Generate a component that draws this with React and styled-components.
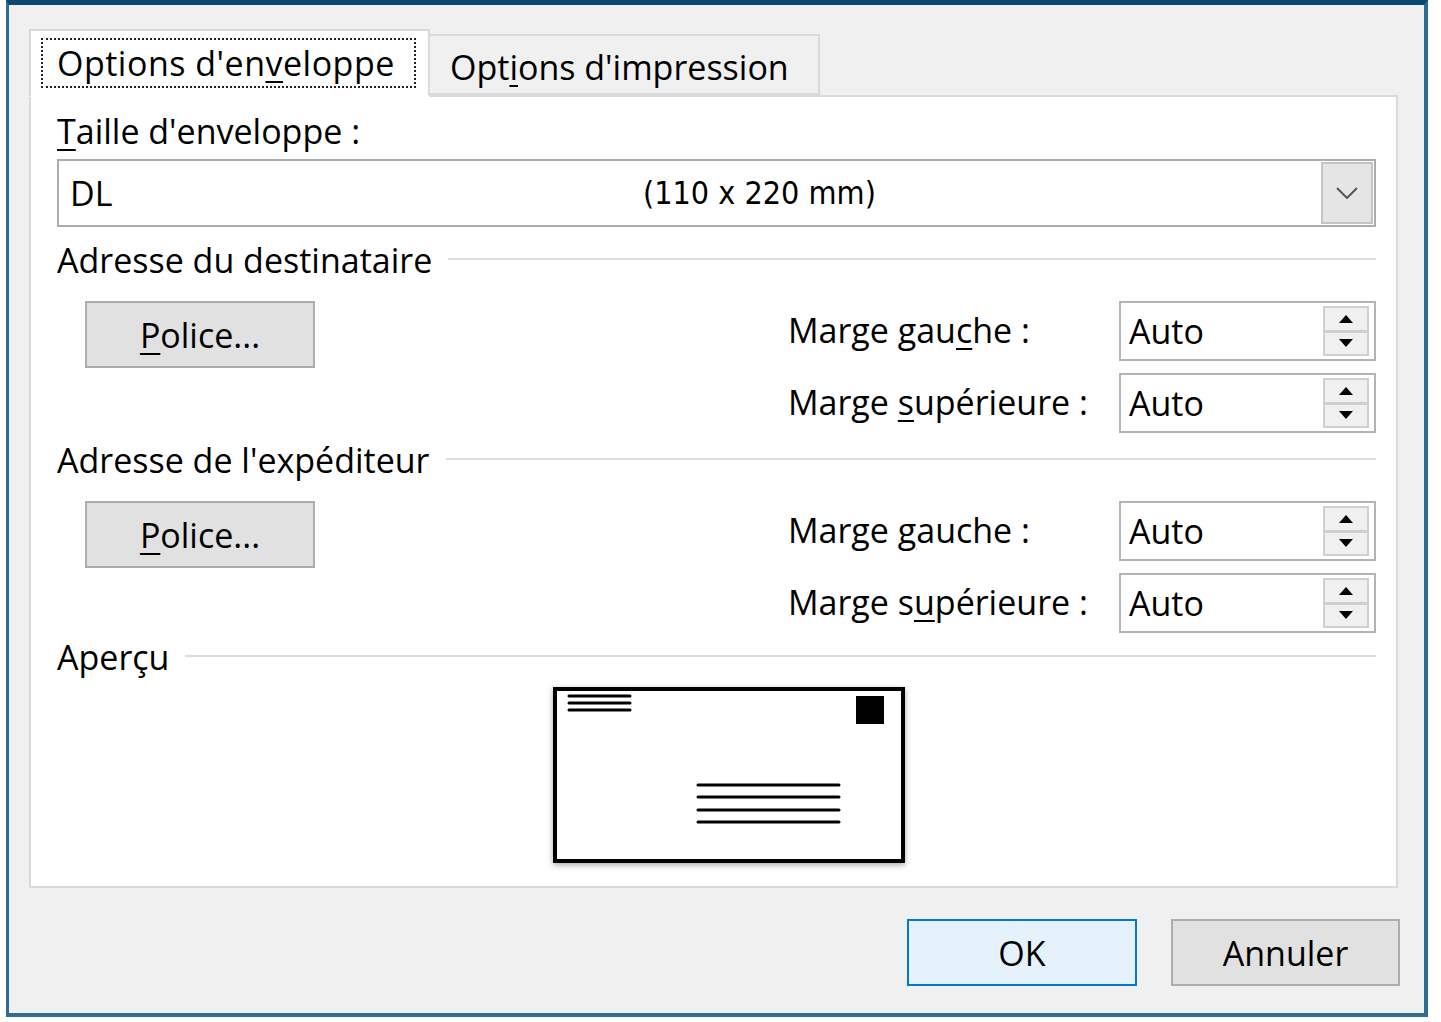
import React from 'react'
import styled, { createGlobalStyle } from 'styled-components'

const GlobalStyle = createGlobalStyle`
  html, body {
    margin: 0;
    padding: 0;
    background: #ffffff;
  }
  body {
    font-family: "Open Sans", "Noto Sans", sans-serif;
    color: #000;
  }
`

const Page = styled.div`
  width: 1441px;
  height: 1022px;
  padding-left: 6px;
  box-sizing: border-box;
`

const Window = styled.div`
  width: 1422px;
  height: 1017px;
  box-sizing: border-box;
  background: #f0f0f0;
  border-top: 5px solid #0c4771;
  border-left: 3px solid #2e6b96;
  border-right: 4px solid #2e6b96;
  border-bottom: 4px solid #2e6b96;
  padding: 24px 24px 0 20px;
  display: flex;
  flex-direction: column;
`

const TabRow = styled.div`
  display: flex;
  align-items: flex-end;
  height: 66px;
  position: relative;
  z-index: 1;
`

const Tab = styled.div`
  box-sizing: border-box;
  display: flex;
  align-items: center;
  height: ${p => (p.$active ? '68px' : '61px')};
  width: ${p => p.$w}px;
  background: ${p => (p.$active ? '#ffffff' : '#f0f0f0')};
  border: 2px solid #d9d9d9;
  border-bottom: ${p => (p.$active ? '2px solid #ffffff' : '2px solid #d9d9d9')};
  border-left: ${p => (p.$active ? '2px solid #d9d9d9' : 'none')};
  margin-bottom: ${p => (p.$active ? '-2px' : '0')};
  padding-left: ${p => (p.$active ? '10px' : '20px')};
  padding-top: ${p => (p.$active ? '0' : '4px')};
  font-size: 34px;
  white-space: nowrap;
`

const FocusBox = styled.div`
  box-sizing: border-box;
  width: 375px;
  height: 50px;
  padding: 0 0 0 14px;
  display: flex;
  align-items: center;
  border: 2px dotted #222;
  letter-spacing: 0.5px;
`

const U = styled.span`
  text-decoration: underline;
  text-underline-offset: 5px;
  text-decoration-thickness: 2px;
`

const Panel = styled.div`
  box-sizing: border-box;
  width: 1369px;
  height: 793px;
  background: #ffffff;
  border: 2px solid #dadada;
  padding: 14px 20px 0 26px;
  display: flex;
  flex-direction: column;
`

const Label = styled.div`
  font-size: 34px;
  line-height: 40px;
  white-space: nowrap;
`

const Combo = styled.div`
  box-sizing: border-box;
  margin-top: 8px;
  height: 68px;
  border: 2px solid #acacac;
  display: flex;
  align-items: stretch;
  background: #fff;
`

const ComboText = styled.div`
  flex: 1;
  display: grid;
  grid-template-columns: 573px 1fr;
  align-items: center;
  padding-left: 11px;
  font-size: 34px;
`

const Narrow = styled.span`
  font-family: "Liberation Sans Narrow", "DejaVu Sans Condensed", "Open Sans", sans-serif;
  font-size: 32px;
`

const DropButton = styled.div`
  box-sizing: border-box;
  width: 52px;
  margin: 1px;
  background: #e5e5e5;
  border: 2px solid #c4c4c4;
  display: flex;
  align-items: center;
  justify-content: center;
`

const GroupHead = styled.div`
  display: flex;
  align-items: center;
  gap: 16px;
  margin-top: ${p => p.$top}px;
  font-size: 34px;
  line-height: 40px;
  white-space: nowrap;
  &::after {
    content: '';
    flex: 1;
    height: 2px;
    background: #dcdcdc;
    margin-top: -2px;
  }
`

const GroupBody = styled.div`
  display: grid;
  grid-template-columns: 1fr 331px 257px;
  grid-auto-rows: 60px;
  row-gap: 12px;
  margin-top: 21px;
  align-items: center;
`

const PushButton = styled.div`
  box-sizing: border-box;
  grid-row: 1;
  grid-column: 1;
  align-self: start;
  margin-left: 28px;
  width: ${p => p.$w}px;
  height: 67px;
  background: ${p => (p.$default ? '#e5f1fb' : '#e1e1e1')};
  border: 2px solid ${p => (p.$default ? '#0078d7' : '#adadad')};
  display: flex;
  align-items: center;
  justify-content: center;
  font-size: 34px;
`

const FieldLabel = styled.div`
  grid-column: 2;
  font-size: 34px;
  white-space: nowrap;
  padding-bottom: 2px;
`

const Spin = styled.div`
  grid-column: 3;
  box-sizing: border-box;
  height: 60px;
  border: 2px solid #b4b4b4;
  background: #fff;
  display: flex;
  align-items: stretch;
`

const SpinText = styled.div`
  flex: 1;
  display: flex;
  align-items: center;
  padding-left: 8px;
  font-size: 34px;
`

const SpinButtons = styled.div`
  box-sizing: border-box;
  width: 46px;
  margin: 3px 5px 3px 0;
  display: flex;
  flex-direction: column;
  border: 2px solid #d0d0d0;
  background: #f0f0f0;
`

const SpinHalf = styled.div`
  flex: 1;
  display: flex;
  align-items: center;
  justify-content: center;
  border-top: ${p => (p.$lower ? '3px solid #cfcfcf' : 'none')};
`

const PreviewRow = styled.div`
  display: flex;
  margin-top: 10px;
  padding-left: 496px;
`

const Envelope = styled.div`
  width: 352px;
  height: 176px;
  box-shadow: 0 2px 6px rgba(0, 0, 0, 0.35);
  line-height: 0;
`

const Footer = styled.div`
  display: flex;
  justify-content: flex-end;
  gap: 34px;
  margin-top: 31px;
  padding-right: 0;
`

const FooterButton = styled(PushButton)`
  margin-left: 0;
`

function Spinner() {
  return (
    <Spin>
      <SpinText>Auto</SpinText>
      <SpinButtons>
        <SpinHalf>
          <svg width="14" height="8" viewBox="0 0 14 8"><path d="M0 8 L7 0 L14 8 Z" fill="#000" /></svg>
        </SpinHalf>
        <SpinHalf $lower>
          <svg width="14" height="8" viewBox="0 0 14 8"><path d="M0 0 L7 8 L14 0 Z" fill="#000" /></svg>
        </SpinHalf>
      </SpinButtons>
    </Spin>
  )
}

function Group({ top, title, left, top2 }) {
  return (
    <>
      <GroupHead $top={top}>{title}</GroupHead>
      <GroupBody>
        <PushButton $w={230}><U>P</U>olice...</PushButton>
        <FieldLabel>{left}</FieldLabel>
        <Spinner />
        <FieldLabel>{top2}</FieldLabel>
        <Spinner />
      </GroupBody>
    </>
  )
}

export default function App() {
  return (
    <Page>
      <GlobalStyle />
      <Window>
        <TabRow>
          <Tab $active $w={401}>
            <FocusBox>Options d'en<U>v</U>eloppe</FocusBox>
          </Tab>
          <Tab $w={390}>Opt<U>i</U>ons d'impression</Tab>
        </TabRow>
        <Panel>
          <Label><U>T</U>aille d'enveloppe :</Label>
          <Combo>
            <ComboText>
              <span>DL</span>
              <Narrow>(110 x 220 mm)</Narrow>
            </ComboText>
            <DropButton>
              <svg width="22" height="12" viewBox="0 0 22 12">
                <path d="M1 1 L11 11 L21 1" fill="none" stroke="#555" strokeWidth="2" />
              </svg>
            </DropButton>
          </Combo>
          <Group
            top={13}
            title="Adresse du destinataire"
            left={<>Marge gau<U>c</U>he :</>}
            top2={<>Marge <U>s</U>upérieure :</>}
          />
          <Group
            top={7}
            title="Adresse de l'expéditeur"
            left={<>Marge <U>g</U>auche :</>}
            top2={<>Marge s<U>u</U>périeure :</>}
          />
          <GroupHead $top={4}>Aperçu</GroupHead>
          <PreviewRow>
            <Envelope>
              <svg width="352" height="176" viewBox="0 0 352 176">
                <rect x="2" y="2" width="348" height="172" fill="#fff" stroke="#000" strokeWidth="4" />
                <g stroke="#000" strokeWidth="3" strokeLinecap="round">
                  <line x1="16" y1="9" x2="77" y2="9" />
                  <line x1="16" y1="16" x2="77" y2="16" />
                  <line x1="16" y1="23" x2="77" y2="23" />
                  <line x1="145" y1="98" x2="286" y2="98" />
                  <line x1="145" y1="110" x2="286" y2="110" />
                  <line x1="145" y1="123" x2="286" y2="123" />
                  <line x1="145" y1="135" x2="286" y2="135" />
                </g>
                <rect x="303" y="9" width="28" height="28" fill="#000" />
              </svg>
            </Envelope>
          </PreviewRow>
        </Panel>
        <Footer>
          <FooterButton $w={230} $default>OK</FooterButton>
          <FooterButton $w={229}>Annuler</FooterButton>
        </Footer>
      </Window>
    </Page>
  )
}
